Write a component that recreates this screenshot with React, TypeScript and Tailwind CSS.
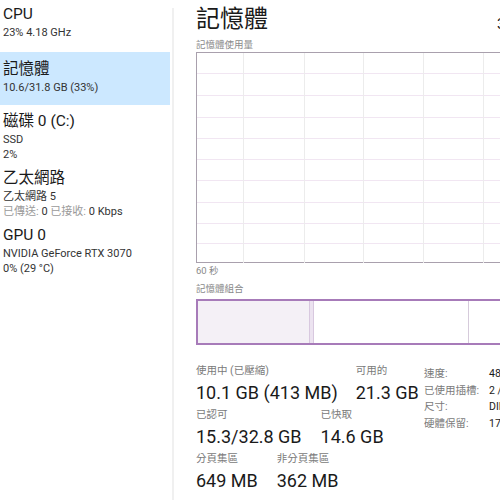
import React from "react";

const font = { fontFamily: 'Roboto, "Noto Sans CJK TC", sans-serif' };

const SideItem: React.FC<{
  title: string;
  lines: React.ReactNode[];
  active?: boolean;
  className?: string;
}> = ({ title, lines, active, className }) => (
  <div className={`pl-[3px] ${active ? "bg-[#cce8ff]" : ""} ${className || ""}`}>
    <p className="text-[15.5px] leading-[22px] text-[#1a1a1a]">{title}</p>
    {lines.map((l, i) => (
      <p key={i} className="text-[11px] leading-[15px] text-[#333]">
        {l}
      </p>
    ))}
  </div>
);

const Grid = () => {
  const vs = [46, 107, 166, 226, 286];
  const hs = [20, 42, 64, 85, 106, 127, 149, 170, 190];
  return (
    <svg width="320" height="210" className="block">
      {hs.map((y) => (
        <line key={y} x1="0" x2="320" y1={y + 0.5} y2={y + 0.5} stroke="#f1e6f2" />
      ))}
      {vs.map((x) => (
        <line key={x} x1={x + 0.5} x2={x + 0.5} y1="0" y2="210" stroke="#ececec" />
      ))}
    </svg>
  );
};

const Stat: React.FC<{ label: string; value: string }> = ({ label, value }) => (
  <div className="whitespace-nowrap">
    <p className="text-[10.5px] leading-[14px] text-[#7a7a7a]">{label}</p>
    <p className="text-[18px] leading-[30px] text-[#1a1a1a]">{value}</p>
  </div>
);

export default function App() {
  return (
    <div className="w-[500px] h-[500px] overflow-hidden bg-white flex" style={font}>
      <div className="w-[172px] shrink-0 pr-[2px]">
        <SideItem className="h-[52px] pt-[3px]" title="CPU" lines={["23% 4.18 GHz"]} />
        <SideItem
          className="h-[53px] pt-[6px]"
          active
          title="記憶體"
          lines={["10.6/31.8 GB (33%)"]}
        />
        <SideItem className="h-[58px] pt-[5px]" title="磁碟 0 (C:)" lines={["SSD", "2%"]} />
        <SideItem
          className="h-[58px] pt-[4px]"
          title="乙太網路"
          lines={[
            "乙太網路 5",
            <>
              <span className="text-[#9a9a9a]">已傳送:</span> 0{" "}
              <span className="text-[#9a9a9a]">已接收:</span> 0 Kbps
            </>,
          ]}
        />
        <SideItem
          className="pt-[3px]"
          title="GPU 0"
          lines={["NVIDIA GeForce RTX 3070", "0%  (29 °C)"]}
        />
      </div>
      <div className="w-[2px] bg-[#f0f0f0] mt-[8px] shrink-0" />
      <div className="flex-1 pl-[22px] relative">
        <h1 className="text-[24px] leading-[32px] mt-[3px] text-[#1a1a1a]">記憶體</h1>
        <span className="absolute left-[323px] top-[13px] text-[15px] whitespace-nowrap text-[#1a1a1a]">
          32.0 GB
        </span>
        <p className="text-[9.5px] leading-[14px] mt-[3px] text-[#8a8a8a]">記憶體使用量</p>
        <div className="w-[320px] h-[211px] border-t border-l border-b border-[#a9a0ad] box-border">
          <Grid />
        </div>
        <p className="text-[9.5px] leading-[14px] mt-[1px] text-[#8a8a8a]">60 秒</p>
        <p className="text-[9.5px] leading-[14px] mt-[4px] text-[#8a8a8a]">記憶體組合</p>
        <div className="w-[320px] h-[46px] mt-[3px] border-t-2 border-l-2 border-b-2 border-[#a77bb9] flex">
          <div className="w-[111px] bg-[#f4f0f6]" />
          <div className="w-[5px] bg-[#ece3f0] border-l border-r border-[#d8c8df]" />
          <div className="w-[155px] border-r border-[#d6cbdb]" />
          <div className="flex-1" />
        </div>
        <div className="flex mt-[19px]">
          <div className="w-[228px] shrink-0">
            <div className="flex gap-[18px]">
              <Stat label="使用中 (已壓縮)" value="10.1 GB (413 MB)" />
              <Stat label="可用的" value="21.3 GB" />
            </div>
            <div className="flex gap-[19px]">
              <Stat label="已認可" value="15.3/32.8 GB" />
              <Stat label="已快取" value="14.6 GB" />
            </div>
            <div className="flex gap-[19px]">
              <Stat label="分頁集區" value="649 MB" />
              <Stat label="非分頁集區" value="362 MB" />
            </div>
          </div>
          <div className="pt-[2px] whitespace-nowrap">
            {[
              ["速度:", "4800 MHz"],
              ["已使用插槽:", "2 / 4"],
              ["尺寸:", "DIMM"],
              ["硬體保留:", "172 MB"],
            ].map(([k, v]) => (
              <div key={k} className="flex text-[10.5px] leading-[16.5px]">
                <span className="w-[65px] shrink-0 text-[#7a7a7a]">{k}</span>
                <span className="text-[#1a1a1a]">{v}</span>
              </div>
            ))}
          </div>
        </div>
      </div>
    </div>
  );
}
